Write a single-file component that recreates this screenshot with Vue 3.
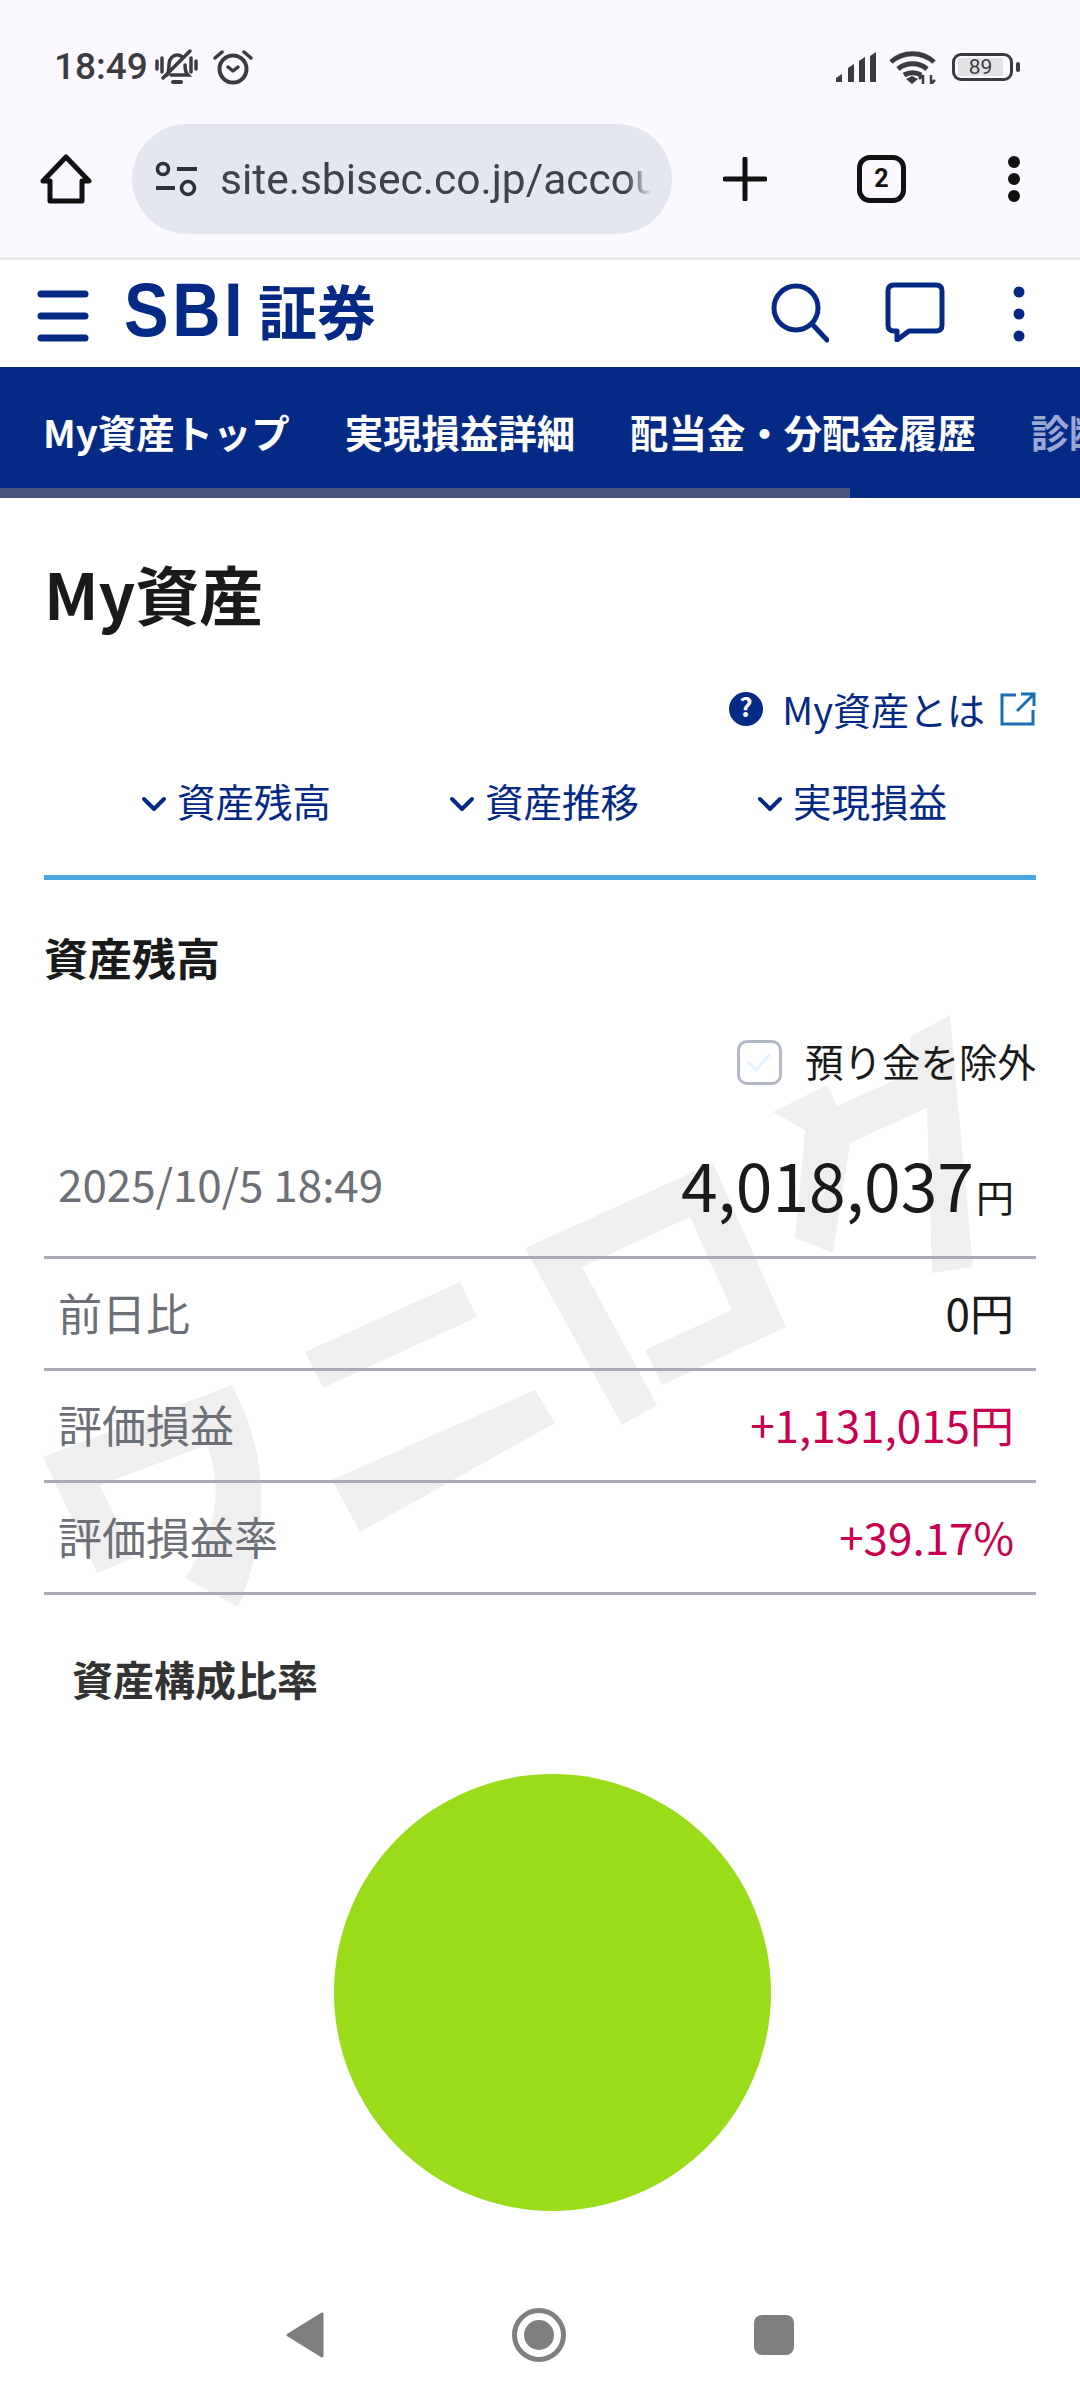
<script setup>
const tabs = ['My資産トップ', '実現損益詳細', '配当金・分配金履歴', '診断']
const anchors = ['資産残高', '資産推移', '実現損益']
const rows = [
  { label: '前日比', value: '0円', plus: false },
  { label: '評価損益', value: '+1,131,015円', plus: true },
  { label: '評価損益率', value: '+39.17%', plus: true }
]
</script>

<template>
  <div class="phone">
    <!-- 透かし -->
    <svg class="watermark" width="1080" height="2400" viewBox="0 0 1080 2400">
      <path d="M43 1457L232 1385Q288 1490 238 1607L185 1578Q232 1510 207 1445L100 1485L133 1558L97 1573Z" />
      <path d="M305 1352L460 1282L477 1317L323 1388Z" />
      <path d="M332 1480L535 1390L555 1423L360 1532Z" />
      <path d="M525 1248L713 1163L786 1327L662 1385L645 1350L732 1310L690 1217L582 1267L657 1405L622 1425Z" />
      <path d="M773 1112L827 1085L837 1106L913 1072L910 1037L950 1015L973 1267L932 1273L927 1108L850 1143L833 1253L795 1238L805 1130Z" />
    </svg>

    <!-- ステータスバー -->
    <div class="status-bar">
      <span class="time">18:49</span>
      <svg class="bell" width="45" height="38" viewBox="0 0 45 38" fill="none" stroke="#3c3c40" stroke-width="3.5" stroke-linecap="round">
        <path d="M3 13v8M8 10v14M37 10v14M42 13v8" />
        <path d="M13 27c2-3 2-8 2-11 0-5 4-9 8-9 2 0 4 .5 5 2M31 17c0 4 1 8 3 10H17" />
        <path d="M9 30L36 3" />
        <path d="M19 34h8" stroke-width="4" />
      </svg>
      <svg class="alarm" width="40" height="36" viewBox="0 0 40 36" fill="none" stroke="#3c3c40" stroke-linecap="round" stroke-linejoin="round">
        <circle cx="20" cy="20" r="13.5" stroke-width="4" />
        <path d="M15 18l5 4 5-4" stroke-width="3.5" />
        <path d="M2 9l7-6M38 9l-7-6" stroke-width="3.5" />
      </svg>
      <span class="spacer"></span>
      <svg class="signal" width="40" height="30" viewBox="0 0 40 30" fill="#3c3c40">
        <path d="M0 30v-4l6-4v8zM12 30V16l6-4v18zM23 30V9l6-4v25zM34 30V4l6-4v30z" />
      </svg>
      <svg class="wifi" width="47" height="35" viewBox="0 0 47 35" fill="none" stroke="#3c3c40" stroke-width="5">
        <path d="M2 13c12-11 31-11 43 0M9 20c8-7 21-7 29 0M15 26c5-3 12-3 17 0" />
        <path d="M17 30l6-3 6 3-6 5z" fill="#3c3c40" stroke="none" />
        <path d="M34 35v-9M30 30l4-4M42 26v9M46 31l-4 4" stroke-width="2.5" />
      </svg>
      <div class="battery">
        <span class="battery-level">89</span>
      </div>
      <span class="battery-nub"></span>
    </div>

    <!-- ブラウザのツールバー -->
    <div class="toolbar">
      <svg class="home-icon" width="52" height="50" viewBox="0 0 52 50" fill="none" stroke="#111" stroke-width="5" stroke-linejoin="round">
        <path d="M26 3L49 27H42V47H10V27H3Z" />
      </svg>
      <div class="url-pill">
        <svg width="42" height="36" viewBox="0 0 42 36" fill="none" stroke="#2f3136" stroke-width="3.6">
          <circle cx="8" cy="8" r="5.5" />
          <path d="M22 8h20M1 27h19" stroke-width="4" />
          <circle cx="33" cy="27" r="6.5" />
        </svg>
        <span class="url-text">site.sbisec.co.jp/account/my</span>
      </div>
      <svg class="plus-icon" width="44" height="44" viewBox="0 0 44 44" stroke="#111" stroke-width="5" stroke-linecap="round">
        <path d="M22 2v40M2 22h40" />
      </svg>
      <div class="tab-count">2</div>
      <svg class="dots" width="14" height="48" viewBox="0 0 14 48" fill="#111">
        <circle cx="7" cy="7" r="6" />
        <circle cx="7" cy="24" r="6" />
        <circle cx="7" cy="41" r="6" />
      </svg>
    </div>

    <!-- サイトヘッダー -->
    <header class="site-header">
      <svg class="menu-icon" width="52" height="52" viewBox="0 0 52 52" stroke="#052a85" stroke-width="7" stroke-linecap="round">
        <path d="M4 4h44M4 26h44M4 48h44" />
      </svg>
      <div class="logo">
        <span class="logo-sbi">SBI</span><span class="logo-ja">証券</span>
      </div>
      <span class="spacer"></span>
      <svg class="search-icon" width="58" height="60" viewBox="0 0 58 60" fill="none" stroke="#052a85" stroke-width="5" stroke-linecap="round">
        <circle cx="25" cy="25" r="22" />
        <path d="M41 41l15 16" />
      </svg>
      <svg class="chat-icon" width="60" height="60" viewBox="0 0 60 60" fill="none" stroke="#052a85" stroke-width="5" stroke-linejoin="round">
        <path d="M9 3H51Q57 3 57 9V43Q57 49 51 49H24L12 58V49H9Q3 49 3 43V9Q3 3 9 3Z" />
      </svg>
      <svg class="more-icon" width="12" height="56" viewBox="0 0 12 56" fill="#052a85">
        <circle cx="6" cy="6" r="5.5" />
        <circle cx="6" cy="28" r="5.5" />
        <circle cx="6" cy="50" r="5.5" />
      </svg>
    </header>

    <!-- タブ -->
    <nav class="nav-tabs">
      <span v-for="(tab, i) in tabs" :key="tab" class="nav-tab" :class="{ faded: i === 3 }">{{ tab }}</span>
      <span class="nav-scroll"></span>
    </nav>

    <main class="content">
      <h1 class="page-title">My資産</h1>

      <div class="help-link">
        <svg width="34" height="34" viewBox="0 0 34 34">
          <circle cx="17" cy="17" r="17" fill="#052a85" />
          <text x="17" y="25" class="help-mark" text-anchor="middle">?</text>
        </svg>
        <span class="help-text">My資産とは</span>
        <svg width="36" height="34" viewBox="0 0 36 34" fill="none" stroke="#1a6fb5" stroke-width="3">
          <path d="M16 3H2V32H33V18" />
          <path d="M21 2H34V14M34 2L17 19" />
        </svg>
      </div>

      <div class="anchors">
        <div v-for="a in anchors" :key="a" class="anchor">
          <svg class="chevron" width="26" height="16" viewBox="0 0 26 16" fill="none" stroke="#052a85" stroke-width="4" stroke-linecap="round" stroke-linejoin="round">
            <path d="M3 3l10 10L23 3" />
          </svg>
          <span>{{ a }}</span>
        </div>
      </div>
      <div class="blue-line"></div>

      <h2 class="section-title">資産残高</h2>

      <div class="exclude-row">
        <span class="checkbox">
          <svg width="28" height="22" viewBox="0 0 28 22" fill="none" stroke="#e6f2fb" stroke-width="3">
            <path d="M3 11l8 8L25 3" />
          </svg>
        </span>
        <span class="exclude-text">預り金を除外</span>
      </div>

      <div class="total-row">
        <span class="total-date">2025/10/5 18:49</span>
        <span class="total-value">4,018,037<small>円</small></span>
      </div>
      <div v-for="row in rows" :key="row.label" class="data-row">
        <span class="data-label">{{ row.label }}</span>
        <span class="data-value" :class="{ plus: row.plus }">{{ row.value }}</span>
      </div>

      <h3 class="ratio-title">資産構成比率</h3>
      <div class="pie"></div>
    </main>

    <!-- ナビゲーションバー -->
    <div class="nav-bar">
      <svg width="38" height="46" viewBox="0 0 38 46" fill="#7f7f7f" stroke="#7f7f7f" stroke-width="3" stroke-linejoin="round">
        <path d="M2 23L36 2V44Z" />
      </svg>
      <svg width="54" height="54" viewBox="0 0 54 54">
        <circle cx="27" cy="27" r="24.5" fill="none" stroke="#7f7f7f" stroke-width="5" />
        <circle cx="27" cy="27" r="15" fill="#7f7f7f" />
      </svg>
      <span class="nav-square"></span>
    </div>
  </div>
</template>

<style>
html, body {
  margin: 0;
  background: #fff;
}
</style>

<style scoped>
.phone {
  position: relative;
  width: 1080px;
  height: 2400px;
  overflow: hidden;
  display: flex;
  flex-direction: column;
  background: #fff;
  font-family: "Noto Sans CJK JP", "Noto Sans", sans-serif;
  color: #1a1a1a;
}

.watermark {
  position: absolute;
  top: 0;
  left: 0;
  fill: #efefef;
}

.spacer {
  flex: 1;
}

/* ステータスバー */
.status-bar {
  height: 125px;
  box-sizing: border-box;
  padding: 8px 60px 0 54px;
  display: flex;
  align-items: center;
  background: #fbf9ff;
  position: relative;
}

.time {
  font-family: Roboto, sans-serif;
  font-size: 37px;
  font-weight: 500;
  color: #3c3c40;
  width: 100px;
}

.alarm {
  margin-left: 14px;
}

.wifi {
  margin-left: 13px;
}

.battery {
  margin-left: 16px;
  width: 61px;
  height: 28px;
  box-sizing: border-box;
  border: 3.5px solid #3c3c40;
  border-radius: 9px;
  padding: 2px 7px 2px 3px;
  display: flex;
}

.battery-level {
  flex: 1;
  background: #e2e2e6;
  font-family: Roboto, sans-serif;
  font-size: 21px;
  line-height: 19px;
  text-align: center;
  color: #3c3c40;
}

.battery-nub {
  width: 4px;
  height: 10px;
  margin-left: 3px;
  border-radius: 2px;
  background: #3c3c40;
}

/* ツールバー */
.toolbar {
  height: 135px;
  box-sizing: border-box;
  padding: 0 0 24px 40px;
  display: flex;
  align-items: center;
  background: #fbf9ff;
  border-bottom: 3px solid #e6e8ec;
  position: relative;
}

.url-pill {
  margin-left: 40px;
  width: 540px;
  height: 110px;
  box-sizing: border-box;
  padding-left: 23px;
  border-radius: 55px;
  background: #e4e7f0;
  display: flex;
  align-items: center;
  flex-shrink: 0;
}

.url-text {
  margin-left: 23px;
  width: 432px;
  overflow: hidden;
  white-space: nowrap;
  font-family: Roboto, sans-serif;
  font-size: 42.5px;
  color: #3f4248;
  -webkit-mask-image: linear-gradient(to right, #000 94%, transparent);
  mask-image: linear-gradient(to right, #000 94%, transparent);
}

.plus-icon {
  margin-left: 51px;
}

.tab-count {
  margin-left: 90px;
  width: 49px;
  height: 48px;
  box-sizing: border-box;
  border: 5px solid #111;
  border-radius: 13px;
  font-family: Roboto, sans-serif;
  font-size: 25px;
  font-weight: 700;
  line-height: 37px;
  text-align: center;
  color: #111;
}

.dots {
  margin-left: 101px;
}

/* ヘッダー */
.site-header {
  height: 107px;
  box-sizing: border-box;
  padding: 0 55px 0 37px;
  display: flex;
  align-items: center;
  background: #fff;
  position: relative;
}

.menu-icon {
  margin-top: 4px;
}

.logo {
  margin: 0 0 8px 35px;
  display: flex;
  align-items: center;
  color: #052a85;
  white-space: nowrap;
}

.logo-sbi {
  display: inline-block;
  width: 134px;
  font-family: "Liberation Sans", sans-serif;
  font-size: 76px;
  font-weight: 700;
  line-height: 80px;
  letter-spacing: 4px;
  transform: scaleX(0.88);
  transform-origin: left center;
}

.logo-ja {
  font-size: 59px;
  font-weight: 700;
  line-height: 80px;
}

.search-icon {
  margin: -2px 0 0 2px;
}

.chat-icon {
  margin: -4px 0 0 56px;
}

.more-icon {
  margin-left: 68px;
}

/* タブ */
.nav-tabs {
  position: relative;
  height: 131px;
  box-sizing: border-box;
  padding: 0 0 3px 43px;
  display: flex;
  align-items: center;
  gap: 55px;
  background: #052a85;
  white-space: nowrap;
}

.nav-tab {
  font-size: 38.4px;
  font-weight: 700;
  color: #fff;
  flex-shrink: 0;
}

.nav-tab.faded {
  color: #9aa8d3;
}

.nav-scroll {
  position: absolute;
  left: 0;
  bottom: 0;
  width: 850px;
  height: 10px;
  background: #47567f;
}

/* コンテンツ */
.content {
  position: relative;
  flex: 1;
  padding: 0 44px;
}

.page-title {
  margin: 49px 0 0;
  font-size: 64px;
  font-weight: 700;
  line-height: 90px;
}

.help-link {
  margin-top: 44px;
  height: 56px;
  display: flex;
  justify-content: flex-end;
  align-items: center;
}

.help-mark {
  font-size: 26px;
  font-weight: 700;
  fill: #fff;
}

.help-text {
  margin: 0 15px 0 19px;
  font-size: 38px;
  line-height: 56px;
  color: #052a85;
}

.anchors {
  margin-top: 33px;
  padding-left: 97px;
  height: 60px;
  display: grid;
  grid-template-columns: repeat(3, 308px);
}

.anchor {
  display: flex;
  align-items: center;
  gap: 10px;
  font-size: 38.5px;
  line-height: 60px;
  color: #052a85;
}

.chevron {
  margin-top: 7px;
}

.blue-line {
  margin-top: 45px;
  height: 5px;
  background: #4aa5e3;
}

.section-title {
  margin: 47px 0 0;
  font-size: 44px;
  font-weight: 700;
  line-height: 60px;
}

.exclude-row {
  margin-top: 53px;
  height: 44px;
  display: flex;
  justify-content: flex-end;
  align-items: center;
  gap: 23px;
  font-size: 38.5px;
}

.exclude-text {
  margin-top: -5px;
}

.checkbox {
  width: 45px;
  height: 45px;
  box-sizing: border-box;
  border: 3px solid #b3b9c6;
  border-radius: 10px;
  background: #fff;
  display: flex;
  align-items: center;
  justify-content: center;
}

.total-row {
  margin-top: 32px;
  height: 143px;
  box-sizing: border-box;
  padding: 0 22px 6px 14px;
  display: flex;
  justify-content: space-between;
  align-items: center;
  border-bottom: 3px solid #a9aabb;
}

.total-date {
  font-size: 44px;
  color: #6c6f75;
}

.total-value {
  font-size: 66px;
}

.total-value small {
  margin-left: 2px;
  font-size: 38px;
}

.data-row {
  height: 112px;
  box-sizing: border-box;
  padding: 0 22px 3px 14px;
  display: flex;
  justify-content: space-between;
  align-items: center;
  border-bottom: 3px solid #a9aabb;
  font-size: 44px;
}

.data-label {
  color: #6c6f75;
}

.data-value.plus {
  color: #c8004f;
}

.ratio-title {
  margin: 53px 0 0;
  padding-left: 28px;
  font-size: 41px;
  font-weight: 700;
  line-height: 60px;
  color: #333;
}

.pie {
  margin: 66px 0 0 290px;
  width: 437px;
  height: 437px;
  border-radius: 50%;
  background: #9bdc1a;
}

/* ナビゲーションバー */
.nav-bar {
  position: absolute;
  left: 0;
  right: 0;
  bottom: 0;
  height: 131px;
  box-sizing: border-box;
  padding-left: 286px;
  display: flex;
  align-items: center;
  gap: 188px;
  background: #fff;
}

.nav-square {
  width: 40px;
  height: 40px;
  border-radius: 8px;
  background: #7f7f7f;
}
</style>
